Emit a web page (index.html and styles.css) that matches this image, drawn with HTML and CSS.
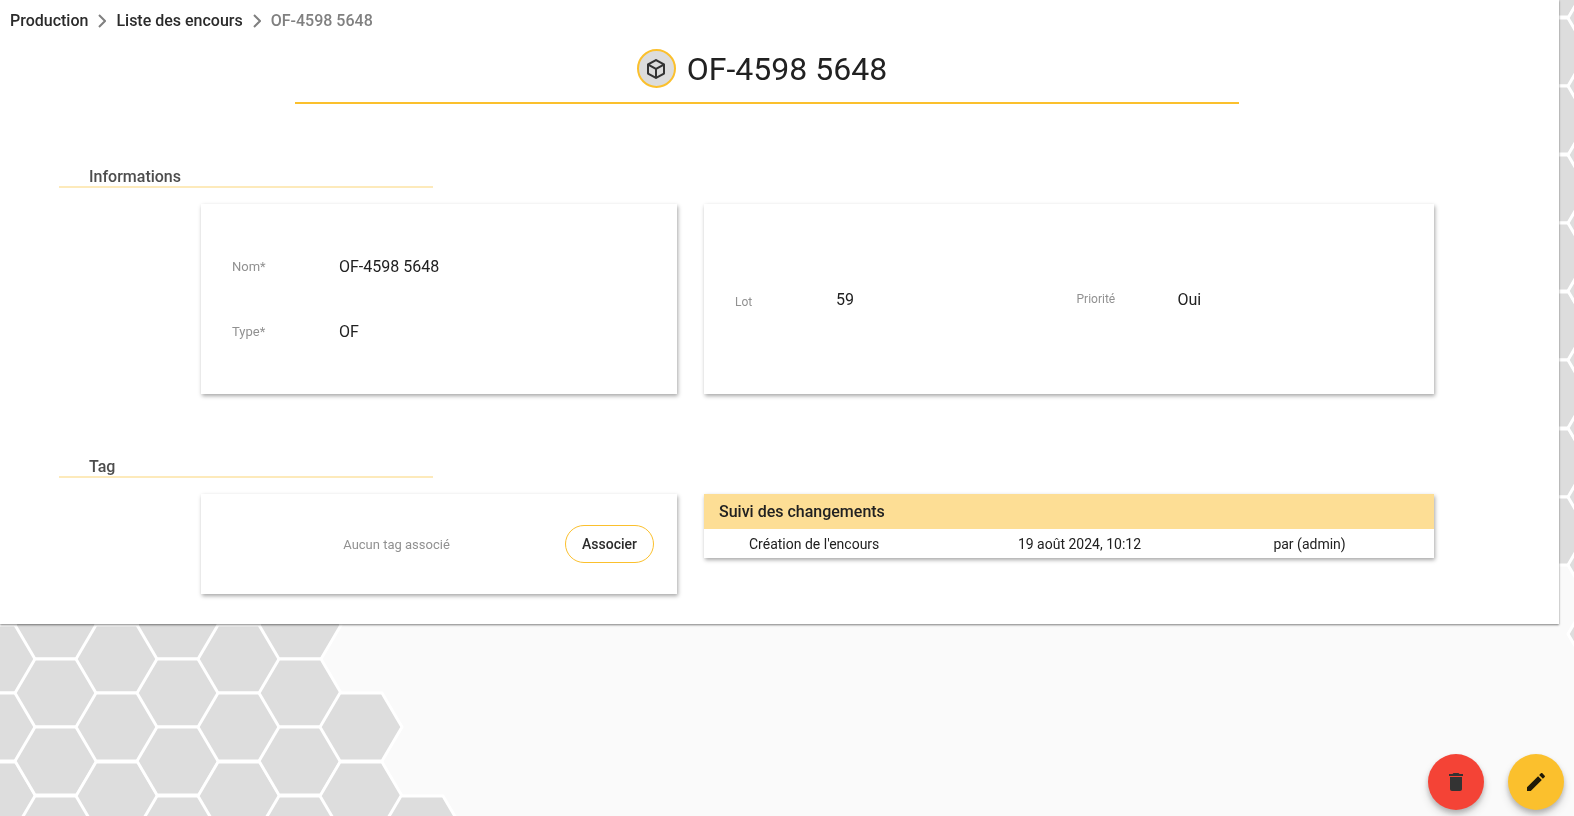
FILE: index.html
```html
<!DOCTYPE html>
<html lang="fr">
<head>
  <meta charset="utf-8">
  <title>OF-4598 5648</title>
  <meta name="viewport" content="width=device-width, initial-scale=1">
  <link rel="stylesheet" href="styles.css">
</head>
<body>

  <!-- Honeycomb background -->
  <svg class="honeycomb honeycomb-left" width="470" height="200" aria-hidden="true">
    <defs>
      <polygon id="hex" points="-41,0 -21,-34 21,-34 41,0 21,34 -21,34"/>
    </defs>
    <use href="#hex" x="-5" y="-26"/>
    <use href="#hex" x="-5" y="43"/>
    <use href="#hex" x="-5" y="111"/>
    <use href="#hex" x="-5" y="180"/>
    <use href="#hex" x="56" y="9"/>
    <use href="#hex" x="56" y="77"/>
    <use href="#hex" x="56" y="145"/>
    <use href="#hex" x="56" y="214"/>
    <use href="#hex" x="117" y="-26"/>
    <use href="#hex" x="117" y="43"/>
    <use href="#hex" x="117" y="111"/>
    <use href="#hex" x="117" y="180"/>
    <use href="#hex" x="178" y="9"/>
    <use href="#hex" x="178" y="77"/>
    <use href="#hex" x="178" y="145"/>
    <use href="#hex" x="178" y="214"/>
    <use href="#hex" x="239" y="43"/>
    <use href="#hex" x="239" y="111"/>
    <use href="#hex" x="239" y="180"/>
    <use href="#hex" x="300" y="9"/>
    <use href="#hex" x="300" y="77"/>
    <use href="#hex" x="300" y="145"/>
    <use href="#hex" x="300" y="214"/>
    <use href="#hex" x="361" y="111"/>
    <use href="#hex" x="361" y="180"/>
    <use href="#hex" x="422" y="214"/>
  </svg>
  <svg class="honeycomb honeycomb-right" width="74" height="680" aria-hidden="true">
    <use href="#hex" x="48" y="-17"/>
    <use href="#hex" x="48" y="52"/>
    <use href="#hex" x="48" y="120"/>
    <use href="#hex" x="48" y="189"/>
    <use href="#hex" x="48" y="257"/>
    <use href="#hex" x="48" y="326"/>
    <use href="#hex" x="48" y="394"/>
    <use href="#hex" x="48" y="463"/>
    <use href="#hex" x="48" y="531"/>
    <use href="#hex" x="109" y="18"/>
    <use href="#hex" x="109" y="86"/>
    <use href="#hex" x="109" y="155"/>
    <use href="#hex" x="109" y="223"/>
    <use href="#hex" x="109" y="291"/>
    <use href="#hex" x="109" y="360"/>
    <use href="#hex" x="109" y="428"/>
    <use href="#hex" x="109" y="497"/>
    <use href="#hex" x="109" y="565"/>
    <use href="#hex" x="109" y="634"/>
  </svg>

  <main class="page">
    <nav class="breadcrumb">
      <a href="#">Production</a>
      <svg class="chevron" viewBox="0 0 8 14"><path d="M1 1l6 6-6 6"/></svg>
      <a href="#">Liste des encours</a>
      <svg class="chevron" viewBox="0 0 8 14"><path d="M1 1l6 6-6 6"/></svg>
      <span class="current">OF-4598 5648</span>
    </nav>

    <header class="title">
      <span class="title-icon">
        <svg viewBox="0 0 24 24"><path d="M21,16.5C21,16.88 20.79,17.21 20.47,17.38L12.57,21.82C12.41,21.94 12.21,22 12,22C11.79,22 11.59,21.94 11.43,21.82L3.53,17.38C3.21,17.21 3,16.88 3,16.5V7.5C3,7.12 3.21,6.79 3.53,6.62L11.43,2.18C11.59,2.06 11.79,2 12,2C12.21,2 12.41,2.06 12.57,2.18L20.47,6.62C20.79,6.79 21,7.12 21,7.5V16.5M12,4.15L6.04,7.5L12,10.85L17.96,7.5L12,4.15M5,15.91L11,19.29V12.58L5,9.21V15.91M19,15.91V9.21L13,12.58V19.29L19,15.91Z"/></svg>
      </span>
      <h1>OF-4598 5648</h1>
    </header>

    <section class="section">
      <h2>Informations</h2>
      <div class="cards">
        <dl class="card card-main">
          <div class="field">
            <dt>Nom*</dt>
            <dd>OF-4598 5648</dd>
          </div>
          <div class="field">
            <dt>Type*</dt>
            <dd>OF</dd>
          </div>
        </dl>
        <dl class="card card-extra">
          <div class="field field-lot">
            <dt>Lot</dt>
            <dd>59</dd>
          </div>
          <div class="field">
            <dt>Priorité</dt>
            <dd>Oui</dd>
          </div>
        </dl>
      </div>
    </section>

    <section class="section">
      <h2>Tag</h2>
      <div class="cards">
        <div class="card card-tag">
          <span class="no-tag">Aucun tag associé</span>
          <button type="button" class="button">Associer</button>
        </div>
        <div class="card card-history">
          <h3 id="history">Suivi des changements</h3>
          <table aria-labelledby="history">
            <tr>
              <td class="change">Création de l'encours</td>
              <td class="date">19 août 2024, 10:12</td>
              <td>par (admin)</td>
            </tr>
          </table>
        </div>
      </div>
    </section>
  </main>

  <!-- Floating actions -->
  <div class="actions">
    <button type="button" class="fab fab-delete" aria-label="Supprimer">
      <svg viewBox="0 0 24 24"><path d="M6 19c0 1.1.9 2 2 2h8c1.1 0 2-.9 2-2V7H6v12zM19 4h-3.500l-1-1h-5l-1 1H5v2h14V4z"/></svg>
    </button>
    <button type="button" class="fab fab-edit" aria-label="Modifier">
      <svg viewBox="0 0 24 24"><path d="M3 17.250V21h3.750L17.810 9.940l-3.750-3.750L3 17.250zM20.710 7.040c.39-.39.39-1.020 0-1.410l-2.340-2.340c-.39-.39-1.020-.39-1.410 0l-1.830 1.830 3.750 3.750 1.830-1.830z"/></svg>
    </button>
  </div>

</body>
</html>
```

FILE: styles.css
```css
* {
  box-sizing: border-box;
}
body {
  margin: 0;
  min-height: 100vh;
  background-color: #fafafa;
  font-family: Roboto, "Liberation Sans", sans-serif;
  font-size: 16px;
  color: #212121;
}
h1, h2, h3, dl, dd {
  margin: 0;
}

/* background */
.honeycomb {
  position: fixed;
  z-index: -1;
  fill: #ddd;
  stroke: #fff;
  stroke-width: 3px;
}
.honeycomb-left {
  left: 0;
  bottom: 0;
}
.honeycomb-right {
  right: 0;
  top: 0;
}

.page {
  margin-right: 15px;
  padding: 11px 0 30px;
  background-color: #fff;
  box-shadow: 0 1px 2px rgba(0,0,0,0.5);
}

.breadcrumb {
  display: flex;
  align-items: center;
  gap: 10px;
  padding-left: 10px;
  line-height: 20px;
  font-weight: 500;
}
.breadcrumb a {
  color: #2b2b2b;
  text-decoration: none;
}
.breadcrumb .current {
  color: #808080;
}
.chevron {
  width: 8px;
  height: 14px;
  fill: none;
  stroke: #808080;
  stroke-width: 2px;
}

.title {
  display: flex;
  justify-content: center;
  align-items: center;
  gap: 11px;
  margin: 0 320px 0 295px;
  padding: 18px 10px 14px 0;
  border-bottom: 2px solid #fbc02d;
}
.title h1 {
  font-size: 32px;
  font-weight: 400;
  line-height: 38px;
}
.title-icon {
  display: flex;
  justify-content: center;
  align-items: center;
  width: 39px;
  height: 39px;
  border: 2px solid #fbc02d;
  border-radius: 50%;
  background-color: #dcdcdc;
}
.title-icon svg {
  width: 24px;
  height: 24px;
  fill: #333;
}

.section {
  padding-top: 64px;
}
.section h2 {
  width: 24%;
  margin-left: 59px;
  padding-left: 30px;
  border-bottom: 2px solid #fdeabb;
  font-size: 16px;
  font-weight: 500;
  line-height: 18px;
  color: #4d4d4d;
}
.cards {
  display: grid;
  grid-template-columns: 238fr 365fr;
  align-items: start;
  gap: 27px;
  margin: 16px 125px 0 201px;
}
.card {
  background-color: #fff;
  box-shadow: 1px 2px 4px rgba(0,0,0,0.35);
}

.field {
  display: flex;
  align-items: center;
}
.field dt, .no-tag {
  color: #919191;
  font-size: 13px;
}
.card-main {
  padding: 30px 31px;
}
.card-main .field {
  height: 65px;
}
.card-main dt {
  width: 107px;
}
.card-extra {
  display: grid;
  grid-template-columns: 1fr 1fr;
  align-self: stretch;
  padding: 0 16px 0 31px;
}
.card-extra dt {
  width: 101px;
  font-size: 12px;
}
.field-lot {
  align-self: center;
  align-items: flex-end;
}

.card-tag {
  display: flex;
  align-items: center;
  min-height: 100px;
  padding: 0 23px 0 27px;
}
.no-tag {
  flex: 1;
  text-align: center;
}
.button {
  height: 38px;
  padding: 0 16px;
  border: 1px solid #fbc02d;
  border-radius: 19px;
  background-color: #fff;
  font-family: inherit;
  font-size: 14px;
  font-weight: 500;
  color: #2b2b2b;
  cursor: pointer;
}

.card-history h3 {
  padding-left: 15px;
  background-color: #fdde95;
  font-size: 16px;
  font-weight: 500;
  line-height: 35px;
}
.card-history table {
  width: 100%;
  border-collapse: collapse;
  table-layout: fixed;
  font-size: 14px;
}
.card-history td {
  height: 29px;
  padding: 0;
}
.card-history .change {
  width: 43%;
  padding-left: 45px;
}
.card-history .date {
  width: 35%;
}

.actions {
  position: fixed;
  right: 10px;
  bottom: 6px;
  display: flex;
  gap: 24px;
}
.fab {
  display: flex;
  justify-content: center;
  align-items: center;
  width: 56px;
  height: 56px;
  padding: 0;
  border: 0;
  border-radius: 50%;
  box-shadow: 0 3px 5px rgba(0,0,0,0.2), 0 6px 10px rgba(0,0,0,0.14);
  cursor: pointer;
}
.fab svg {
  width: 24px;
  height: 24px;
}
.fab-delete {
  background-color: #f44336;
  fill: #333;
}
.fab-edit {
  background-color: #fbc02d;
  fill: #1f1a08;
}
```
